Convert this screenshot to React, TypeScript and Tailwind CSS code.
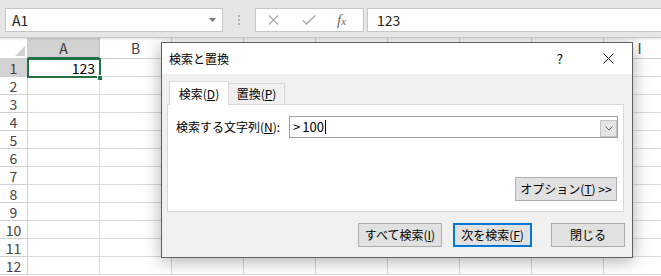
import React from "react";

const COLS = ["A", "B", "C", "D", "E", "F", "G", "H", "I"];
const ROWS = [1, 2, 3, 4, 5, 6, 7, 8, 9, 10, 11, 12];

function U({ children }: { children: React.ReactNode }) {
  return <span className="underline underline-offset-[1px]">{children}</span>;
}

function Btn({
  w,
  children,
  primary,
}: {
  w: string;
  children: React.ReactNode;
  primary?: boolean;
}) {
  return (
    <div
      className={
        "h-[24px] flex items-center justify-center bg-[#e1e1e1] " +
        w +
        (primary ? " border-2 border-[#0078d7]" : " border border-[#adadad]")
      }
    >
      {children}
    </div>
  );
}

export default function App() {
  return (
    <div className="relative w-[661px] h-[276px] overflow-hidden bg-white font-['Noto_Sans_CJK_JP',sans-serif] text-black">
      {/* Formula bar */}
      <div className="h-[38px] bg-[#e6e6e6] flex items-start pt-[8px] pl-[5px] border-b border-[#c8c8c8] shadow-[0_1px_2px_rgba(0,0,0,0.12)] relative z-[1]">
        <div className="w-[218px] h-[24px] bg-white border border-[#c6c6c6] flex items-center pl-[6px] pr-[6px] text-[14px] text-[#222]">
          <span className="leading-[16px]">A1</span>
          <svg className="ml-auto" width="7" height="4" viewBox="0 0 7 4">
            <polygon points="0,0 7,0 3.5,4" fill="#777" />
          </svg>
        </div>
        <div className="w-[32px] h-[24px] flex flex-col items-center justify-center gap-[2px]">
          <div className="w-[2px] h-[2px] bg-[#b4b4b4]" />
          <div className="w-[2px] h-[2px] bg-[#b4b4b4]" />
          <div className="w-[2px] h-[2px] bg-[#b4b4b4]" />
        </div>
        <div className="w-[109px] h-[24px] bg-white border border-[#c6c6c6] flex items-center">
          <svg className="ml-[12px]" width="11" height="10" viewBox="0 0 11 10">
            <path d="M1 0.5 L10 9.5 M10 0.5 L1 9.5" stroke="#a8a8a8" strokeWidth="1.2" />
          </svg>
          <svg className="ml-[23px]" width="14" height="10" viewBox="0 0 14 10">
            <path d="M0.8 5.2 L4.6 9 L13.2 0.6" stroke="#a8a8a8" strokeWidth="1.4" fill="none" />
          </svg>
          <span className="ml-[21px] font-['Liberation_Serif',serif] italic text-[15px] leading-none text-[#6a6a6a]">
            f<span className="text-[11px]">x</span>
          </span>
        </div>
        <div className="ml-[3px] flex-1 h-[24px] bg-white border border-[#c6c6c6] border-r-0 flex items-center pl-[9px] text-[14px] text-[#222]">
          <span className="leading-[16px]">123</span>
        </div>
      </div>

      {/* Grid */}
      <div className="flex flex-col">
        <div className="flex h-[21px]">
          <div className="w-[28px] shrink-0 border-r border-b border-[#d0d0d0] relative">
            <svg className="absolute left-0 top-0" width="28" height="21" viewBox="0 0 28 21">
              <polygon points="25,8 25,18 15,18" fill="#d0d0d0" />
            </svg>
          </div>
          {COLS.map((c) =>
            c === "A" ? (
              <div
                key={c}
                className="w-[72px] shrink-0 bg-[#d2d2d2] border-r border-[#c0c0c0] border-b-2 border-b-[#217346] flex items-end justify-center pb-[1px] text-[14px] text-[#3a3a3a]"
              >
                <span className="leading-[16px]">{c}</span>
              </div>
            ) : (
              <div
                key={c}
                className="w-[72px] shrink-0 border-r border-b border-[#d0d0d0] flex items-end justify-center pb-[2px] text-[14px] text-[#444]"
              >
                <span className="leading-[16px]">{c}</span>
              </div>
            )
          )}
        </div>
        {ROWS.map((r) => (
          <div key={r} className="flex h-[18px]">
            <div
              className={
                "w-[28px] shrink-0 border-r border-b border-[#d0d0d0] flex items-center justify-center text-[14px] text-[#444] " +
                (r === 1 ? "bg-[#d2d2d2]" : "")
              }
            >
              <span className="leading-[16px]">{r}</span>
            </div>
            {COLS.map((c) => (
              <div
                key={c}
                className="w-[72px] shrink-0 border-r border-b border-[#dadada] flex items-center justify-end pr-[4px] text-[14px]"
              >
                {r === 1 && c === "A" ? <span className="leading-[16px]">123</span> : null}
              </div>
            ))}
          </div>
        ))}
      </div>

      {/* Active cell selection */}
      <div className="absolute left-[27px] top-[58px] w-[74px] h-[20px] border-2 border-[#217346]" />
      <div className="absolute left-[97px] top-[75px] w-[6px] h-[6px] bg-[#217346] border border-white" />

      {/* Find & Replace dialog */}
      <div className="absolute left-[161px] top-[42px] w-[472px] h-[216px] border border-[#5f5f5f] bg-[#f0f0f0] shadow-[0_3px_16px_rgba(0,0,0,0.32)] flex flex-col text-[12px]">
        <div className="h-[31px] shrink-0 bg-white flex items-center pl-[7px]">
          <span className="leading-[16px]">検索と置換</span>
          <span className="ml-auto mr-[40px] leading-[16px] text-[13px]">?</span>
          <svg className="mr-[18px]" width="11" height="11" viewBox="0 0 11 11">
            <path d="M0.5 0.5 L10.5 10.5 M10.5 0.5 L0.5 10.5" stroke="#111" strokeWidth="1" />
          </svg>
        </div>

        <div className="flex-1 flex flex-col pl-[5px] pr-[8px] pt-[7px]">
          {/* Tabs */}
          <div className="flex items-end h-[24px] pl-[2px] relative z-[1] -mb-px">
            <div className="w-[60px] h-[24px] bg-white border border-[#d9d9d9] border-b-0 flex items-center justify-center">
              <span className="leading-[16px]">
                検索(<U>D</U>)
              </span>
            </div>
            <div className="w-[56px] h-[22px] bg-[#f0f0f0] border border-l-0 border-[#d9d9d9] flex items-center justify-center">
              <span className="leading-[16px]">
                置換(<U>P</U>)
              </span>
            </div>
          </div>

          {/* Panel */}
          <div className="h-[108px] bg-white border border-[#d9d9d9] flex flex-col pt-[11px] pl-[8px] pr-[5px]">
            <div className="flex items-center h-[22px]">
              <div className="w-[113px] shrink-0 leading-[16px]">
                検索する文字列(<U>N</U>):
              </div>
              <div className="flex-1 h-[22px] border border-[#a0a0a0] flex items-center pl-[3px]">
                <span className="leading-[16px] text-[13px]">&gt;</span>
                <span className="ml-[2px] leading-[16px] text-[13px]">100</span>
                <div className="w-px h-[14px] bg-black ml-[1px]" />
                <div className="ml-auto mt-[3px] w-[17px] h-[17px] bg-[#e5e5e5] border border-[#c4c4c4] flex items-center justify-center">
                  <svg width="8" height="5" viewBox="0 0 8 5">
                    <path d="M0.5 0.5 L4 4 L7.5 0.5" stroke="#606060" strokeWidth="1" fill="none" />
                  </svg>
                </div>
              </div>
            </div>
            <div className="mt-auto mb-[10px] self-end mr-px">
              <Btn w="w-[102px]">
                <span className="leading-[16px]">
                  オプション(<U>T</U>) &gt;&gt;
                </span>
              </Btn>
            </div>
          </div>

          {/* Bottom buttons */}
          <div className="flex justify-end mt-[11px] -mr-px">
            <Btn w="w-[84px]">
              <span className="leading-[16px]">
                すべて検索(<U>I</U>)
              </span>
            </Btn>
            <div className="w-[11px]" />
            <Btn w="w-[79px]" primary>
              <span className="leading-[16px]">
                次を検索(<U>F</U>)
              </span>
            </Btn>
            <div className="w-[19px]" />
            <Btn w="w-[74px]">
              <span className="leading-[16px]">閉じる</span>
            </Btn>
          </div>
        </div>
      </div>
    </div>
  );
}
